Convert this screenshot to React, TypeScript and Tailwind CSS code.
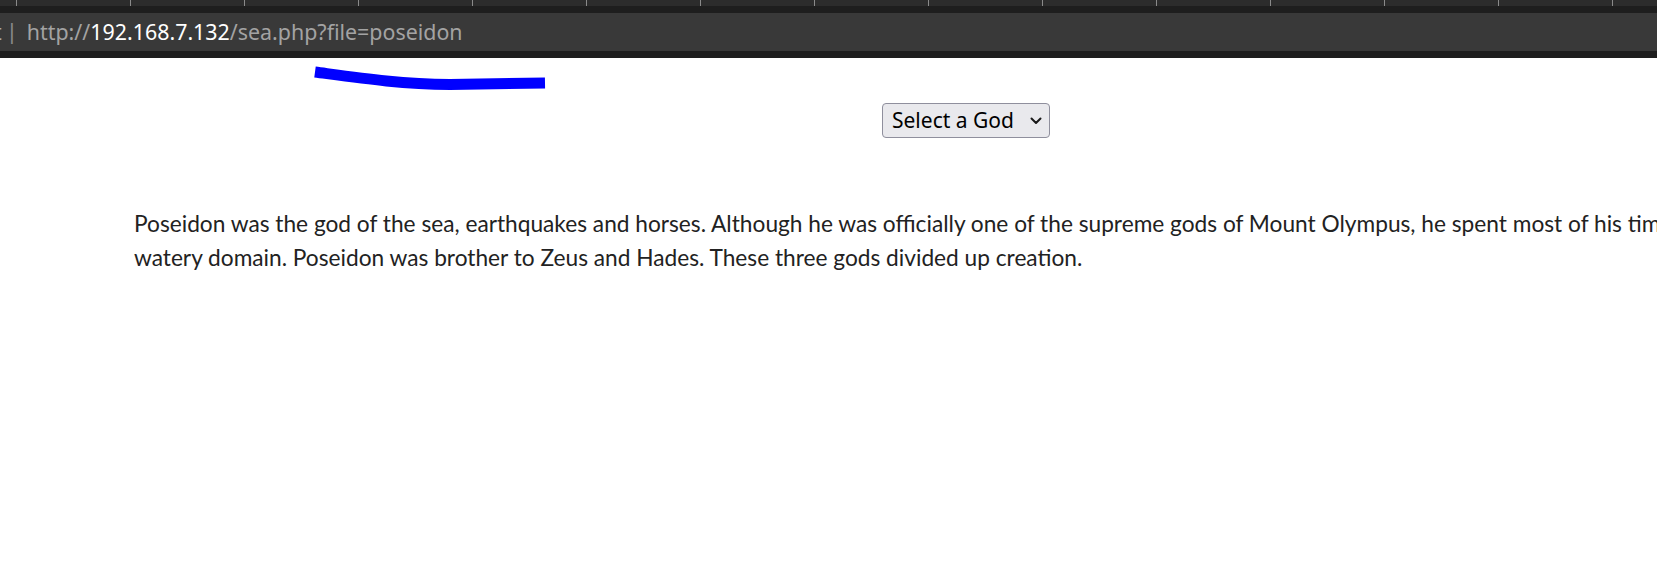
import React from "react";

const ticks = Array.from({ length: 15 }, (_, i) => i);

function BrowserBar() {
    return (
        <header className="w-full">
            <div className="h-[6px] bg-[#2c2c2c] flex pl-[16px] gap-[113px]">
                {ticks.map((t) => (
                    <span key={t} className="w-px h-full bg-[#8a8a8a]" />
                ))}
            </div>
            <div className="h-[7px] bg-[#1e1e1e]" />
            <div
                className="h-[38px] bg-[#393939] flex items-center text-[21.4px] whitespace-nowrap overflow-hidden"
                style={{ fontFamily: '"Noto Sans", "Open Sans", sans-serif' }}
            >
                <span className="text-[#a8a8a8] -ml-[6px] w-[9px] overflow-hidden">t</span>
                <span className="text-[#8c8c8c] ml-[3px] -mt-[2px]">|</span>
                <span className="ml-[9px] text-[#a3a3a3]">
                    http://<span className="text-white">192.168.7.132</span>/sea.php?file=poseidon
                </span>
            </div>
            <div className="h-[7px] bg-[#1e1e1e]" />
        </header>
    );
}

function Chevron() {
    return (
        <svg width="12" height="8" viewBox="0 0 12 8" className="ml-[16px]">
            <path d="M1.5 1.5 L6 6 L10.5 1.5" fill="none" stroke="#1a1a1a" strokeWidth="2" strokeLinecap="round" strokeLinejoin="round" />
        </svg>
    );
}

export default function App() {
    return (
        <div className="relative w-[1657px] h-[578px] bg-white overflow-hidden">
            <BrowserBar />

            <main style={{ fontFamily: "Lato, sans-serif" }}>
                <div className="pl-[882px] pt-[45px]">
                    <div
                        className="w-[168px] h-[35px] flex items-center pl-[9px] bg-[#e9e9ed] border border-[#8f8f9d] rounded-[4px] text-[21px] text-black"
                        style={{ fontFamily: '"Noto Sans", "Open Sans", sans-serif' }}
                    >
                        <span className="leading-none">Select a God</span>
                        <Chevron />
                    </div>
                </div>

                <p className="mt-[69px] ml-[134px] text-[22.7px] leading-[34px] text-[#222] whitespace-nowrap">
                    Poseidon was the god of the sea, earthquakes and horses. Although he was officially one of the supreme gods of Mount Olympus, he spent most of his time in his
                    <br />
                    watery domain. Poseidon was brother to Zeus and Hades. These three gods divided up creation.
                </p>
            </main>

            {/* hand-drawn annotation under the url */}
            <svg className="absolute left-0 top-0 pointer-events-none" width="1657" height="100">
                <path
                    d="M315 72 C 360 78, 400 84, 450 84.5 L 545 83"
                    fill="none"
                    stroke="#0000ff"
                    strokeWidth="11"
                    strokeLinecap="butt"
                />
            </svg>
        </div>
    );
}
